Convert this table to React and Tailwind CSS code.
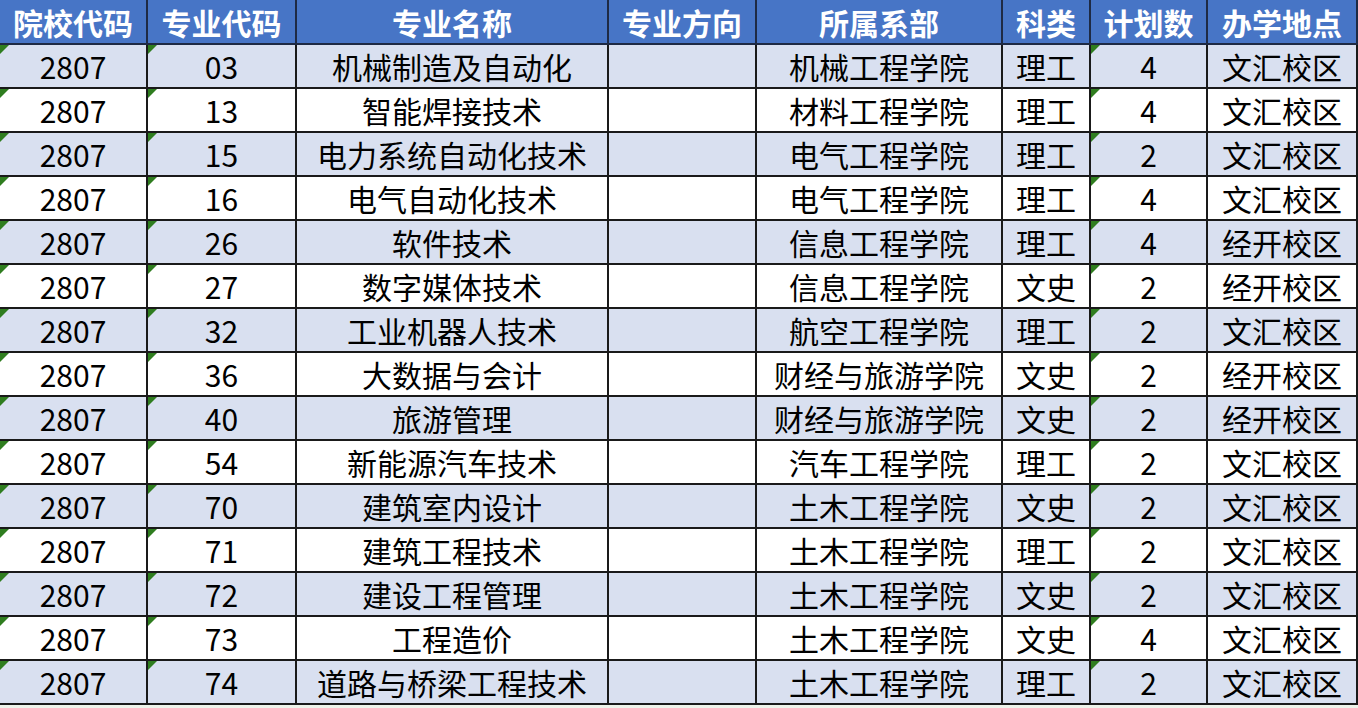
import React from 'react';

const headers = ['院校代码', '专业代码', '专业名称', '专业方向', '所属系部', '科类', '计划数', '办学地点'];

const rows = [
  ['03', '机械制造及自动化', '机械工程学院', '理工', '4', '文汇校区'],
  ['13', '智能焊接技术', '材料工程学院', '理工', '4', '文汇校区'],
  ['15', '电力系统自动化技术', '电气工程学院', '理工', '2', '文汇校区'],
  ['16', '电气自动化技术', '电气工程学院', '理工', '4', '文汇校区'],
  ['26', '软件技术', '信息工程学院', '理工', '4', '经开校区'],
  ['27', '数字媒体技术', '信息工程学院', '文史', '2', '经开校区'],
  ['32', '工业机器人技术', '航空工程学院', '理工', '2', '文汇校区'],
  ['36', '大数据与会计', '财经与旅游学院', '文史', '2', '经开校区'],
  ['40', '旅游管理', '财经与旅游学院', '文史', '2', '经开校区'],
  ['54', '新能源汽车技术', '汽车工程学院', '理工', '2', '文汇校区'],
  ['70', '建筑室内设计', '土木工程学院', '文史', '2', '文汇校区'],
  ['71', '建筑工程技术', '土木工程学院', '理工', '2', '文汇校区'],
  ['72', '建设工程管理', '土木工程学院', '文史', '2', '文汇校区'],
  ['73', '工程造价', '土木工程学院', '文史', '4', '文汇校区'],
  ['74', '道路与桥梁工程技术', '土木工程学院', '理工', '2', '文汇校区'],
];

const cols = 'grid grid-cols-[148px_149px_312px_148px_246px_88px_117px_150px]';

// Excel "number stored as text" marker
const Flag = () => (
  <span className="absolute left-0 top-0 w-0 h-0 border-t-[9px] border-r-[9px] border-t-[#2f7d1f] border-r-transparent" />
);

const Cell = ({ children, flag }) => (
  <div className="relative flex items-center justify-center h-[44px] border-r-2 border-b-2 border-[#1a1a1a] leading-none">
    {flag && <Flag />}
    {children}
  </div>
);

export default function App() {
  return (
    <div className="w-[1358px] h-[708px] bg-[#eef3ea] overflow-hidden font-['Noto_Sans_CJK_SC','Noto_Sans',sans-serif]">
      {/* Header row */}
      <div className={`${cols} bg-[#4775c6] text-white font-bold text-[30px]`}>
        {headers.map((h) => (
          <div key={h} className="flex items-center justify-center h-[45px] border-r-2 border-b-2 border-[#1e2a44] leading-none">
            {h}
          </div>
        ))}
      </div>

      {/* Body rows */}
      {rows.map((r, i) => (
        <div key={r[0]} className={`${cols} text-[30px] text-black ${i % 2 === 0 ? 'bg-[#d9e0f0]' : 'bg-white'}`}>
          <Cell flag>2807</Cell>
          <Cell flag>{r[0]}</Cell>
          <Cell>{r[1]}</Cell>
          <Cell />
          <Cell>{r[2]}</Cell>
          <Cell>{r[3]}</Cell>
          <Cell flag>{r[4]}</Cell>
          <Cell>{r[5]}</Cell>
        </div>
      ))}
    </div>
  );
}
